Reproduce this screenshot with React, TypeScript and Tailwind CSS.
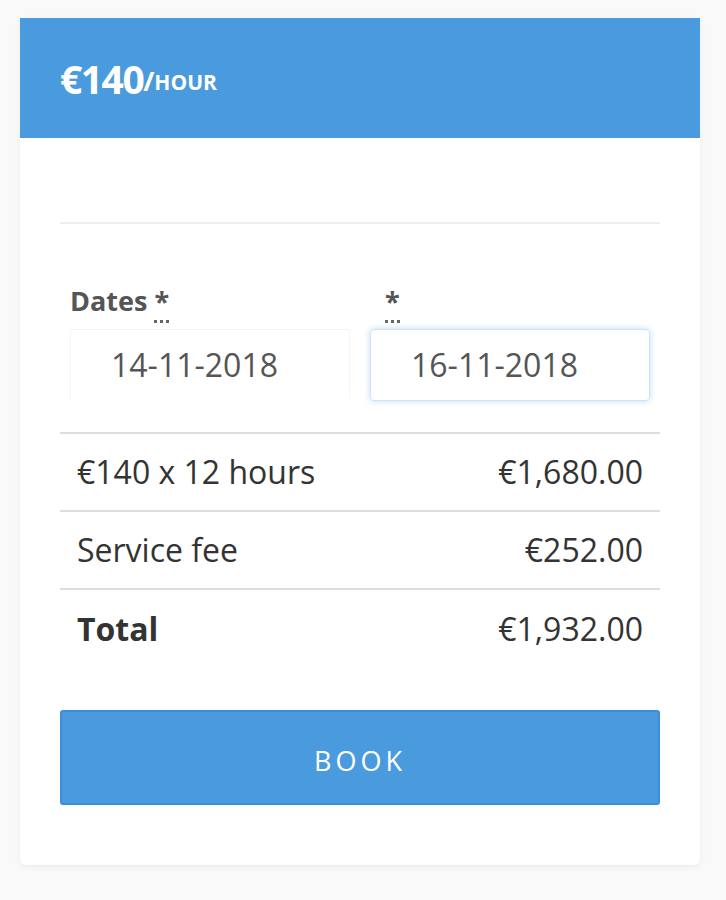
import React from 'react';

const rows = [
  { label: '€140 x 12 hours', value: '€1,680.00', bold: false },
  { label: 'Service fee', value: '€252.00', bold: false },
  { label: 'Total', value: '€1,932.00', bold: true },
];

function Req() {
  return (
    <abbr
      title="required"
      className="no-underline border-b-[3px] border-dotted border-[#666] leading-none pb-[1px]"
    >
      *
    </abbr>
  );
}

export default function App() {
  return (
    <div className="min-h-[900px] bg-[#f9f9f9] pt-[18px] pl-[20px] font-['Open_Sans','Noto_Sans',sans-serif]">
      <div className="w-[680px] bg-white rounded-b-md shadow-[0_2px_6px_rgba(0,0,0,0.06)] pb-[60px]">
        <div className="h-[120px] bg-[#4a9bdd] px-[40px] flex items-center text-white font-bold">
          <span className="text-[39px] tracking-[-1.5px] leading-none">€140</span>
          <span className="text-[27px] leading-none self-center mt-[4px]">/</span>
          <span className="text-[21px] uppercase leading-none mt-[8px]">hour</span>
        </div>

        <div className="px-[40px]">
          <div className="pt-[84px] border-b-2 border-[#eeeeee]" />

          <div className="grid grid-cols-2 gap-[20px] px-[10px] pt-[62px] pb-[31px]">
            <div>
              <label className="block text-[27px] font-bold text-[#555] leading-[30px] mb-[13px]">
                Dates <Req />
              </label>
              <div className="h-[71px] border border-[#f4f4f4] border-b-0 rounded-[3px] flex items-center pl-[40px] text-[32px] text-[#555]">
                14-11-2018
              </div>
            </div>
            <div>
              <label className="block text-[27px] font-bold text-[#555] leading-[30px] mb-[13px] pl-[15px]">
                <Req />
              </label>
              <div className="h-[72px] border border-[#cfe3f5] rounded-[4px] shadow-[0_0_6px_rgba(74,155,221,0.35)] flex items-center pl-[40px] text-[32px] text-[#555]">
                16-11-2018
              </div>
            </div>
          </div>

          <div className="border-t-2 border-[#dddddd]">
            {rows.map((r) => (
              <div
                key={r.label}
                className="h-[78px] flex items-center justify-between px-[17px] text-[32px] text-[#333] border-b-2 border-[#dddddd] last:border-b-0"
              >
                <span className={r.bold ? 'font-bold' : ''}>{r.label}</span>
                <span>{r.value}</span>
              </div>
            ))}
          </div>

          <button className="mt-[42px] w-full h-[95px] pt-[8px] bg-[#4a9bdd] border-2 border-[#3a8fd8] rounded-[3px] text-white text-[27px] tracking-[4px] uppercase">
            Book
          </button>
        </div>
      </div>
    </div>
  );
}
